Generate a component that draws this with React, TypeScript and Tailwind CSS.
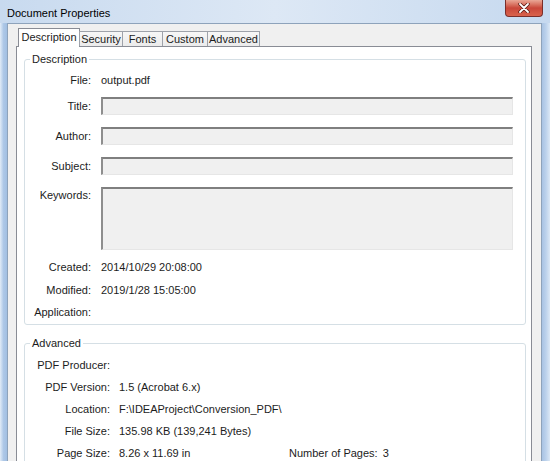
import React from "react";

function Group({
  title,
  children,
  className,
}: {
  title: string;
  children: React.ReactNode;
  className: string;
}) {
  return (
    <div className={`relative border border-[#d5dfe5] rounded-[3px] ${className}`}>
      <span className="absolute -top-[8px] left-[5px] px-[2px] bg-white leading-[14px]">{title}</span>
      {children}
    </div>
  );
}

function Field({ label, tall }: { label: string; tall?: boolean }) {
  return (
    <div className={tall ? "flex items-start mt-[12px]" : "flex items-center mt-[12px]"}>
      <div className={tall ? "w-[66px] shrink-0 text-right leading-[14px] pt-[1px]" : "w-[66px] shrink-0 text-right"}>
        {label}
      </div>
      <div
        className={`ml-[10px] flex-1 bg-[#f0f0f0] border-t-2 border-l-2 border-b border-r border-t-[#7f7f7f] border-l-[#8e8e8e] border-b-[#e6e6e6] border-r-[#e6e6e6] ${
          tall ? "h-[63px]" : "h-[18px]"
        }`}
      />
    </div>
  );
}

function Row({ label, value, className }: { label: string; value: string; className: string }) {
  return (
    <div className={`flex items-center h-[18px] ${className}`}>
      <div className="w-[66px] shrink-0 text-right">{label}</div>
      <div className="ml-[10px]">{value}</div>
    </div>
  );
}

function ARow({ label, children }: { label: string; children?: React.ReactNode }) {
  return (
    <div className="flex items-center h-[18px]">
      <div className="w-[85px] shrink-0 text-right">{label}</div>
      <div className="ml-[9px] flex items-center">{children}</div>
    </div>
  );
}

export default function App() {
  return (
    <div className="w-[550px] h-[461px] overflow-hidden flex flex-col bg-[#b9cfea] font-['Liberation_Sans',Arial,sans-serif] text-[11px] text-[#1c1c1c]">
      {/* title bar */}
      <div className="h-[23px] shrink-0 flex items-start bg-gradient-to-r from-[#c8daef] via-[#dde8f5] to-[#c6d9ef]">
        <span className="ml-[7px] mt-[6px] leading-[14px] text-black">Document Properties</span>
        <div className="ml-auto mr-[7px] w-[38px] h-[17px] rounded-b-[4px] border border-t-0 border-[#7a2e2a] bg-gradient-to-b from-[#e9a796] via-[#c9473a] to-[#d9624c] flex items-center justify-center">
          <svg width="12" height="10" viewBox="0 0 12 10">
            <path d="M2 1 L10 9 M10 1 L2 9" stroke="#5a1a14" strokeWidth="3.4" strokeLinecap="round" />
            <path d="M2 1 L10 9 M10 1 L2 9" stroke="#ffffff" strokeWidth="1.8" strokeLinecap="round" />
          </svg>
        </div>
      </div>

      <div className="flex-1 flex min-h-0">
        <div className="w-[7px] shrink-0 bg-gradient-to-r from-[#e2ecf7] via-[#aec8e7] to-[#a2bfe2]" />
        <div className="w-[535px] shrink-0 bg-[#f0f0f0] border-l border-t border-r border-[#8ea3bb] pl-[8px] pt-[4px] flex flex-col">
          {/* tabs */}
          <div className="relative z-10 h-[19px] shrink-0 flex items-end pl-[2px]">
            <div className="w-[62px] h-[19px] bg-white border border-b-0 border-[#898c95] flex items-center justify-center pb-[1px]">
              Description
            </div>
            <div className="w-[44px] h-[15px] mb-[1px] -ml-px border border-b-0 border-[#9ea2aa] bg-gradient-to-b from-[#f7f7f7] to-[#ebebeb] flex items-center justify-center">
              Security
            </div>
            <div className="w-[41px] h-[15px] mb-[1px] -ml-px border border-b-0 border-[#9ea2aa] bg-gradient-to-b from-[#f7f7f7] to-[#ebebeb] flex items-center justify-center">
              Fonts
            </div>
            <div className="w-[46px] h-[15px] mb-[1px] -ml-px border border-b-0 border-[#9ea2aa] bg-gradient-to-b from-[#f7f7f7] to-[#ebebeb] flex items-center justify-center">
              Custom
            </div>
            <div className="w-[53px] h-[15px] mb-[1px] -ml-px border border-b-0 border-[#9ea2aa] bg-gradient-to-b from-[#f7f7f7] to-[#ebebeb] flex items-center justify-center">
              Advanced
            </div>
          </div>

          {/* panel */}
          <div className="relative w-[516px] flex-1 -mt-px bg-white border border-b-0 border-[#898c95] pl-[7px] pr-[5px] pt-[12px]">
            <Group title="Description" className="pt-[11px] pb-[3px] pr-[12px]">
              <Row label="File:" value="output.pdf" className="" />
              <div className="-mt-[4px]">
                <Field label="Title:" />
              </div>
              <Field label="Author:" />
              <Field label="Subject:" />
              <Field label="Keywords:" tall />
              <Row label="Created:" value="2014/10/29 20:08:00" className="mt-[8px]" />
              <Row label="Modified:" value="2019/1/28 15:05:00" className="mt-[5px]" />
              <Row label="Application:" value="" className="mt-[4px]" />
            </Group>

            <Group title="Advanced" className="mt-[18px] pt-[12px] pb-[20px] flex flex-col gap-[4px]">
              <ARow label="PDF Producer:" />
              <ARow label="PDF Version:">1.5 (Acrobat 6.x)</ARow>
              <ARow label="Location:">F:\IDEAProject\Conversion_PDF\</ARow>
              <ARow label="File Size:">135.98 KB (139,241 Bytes)</ARow>
              <ARow label="Page Size:">
                <span className="w-[170px]">8.26 x 11.69 in</span>
                <span>Number of Pages:</span>
                <span className="ml-[5px]">3</span>
              </ARow>
            </Group>
          </div>
        </div>
        <div className="flex-1 bg-gradient-to-r from-[#a9c3e3] via-[#bcd2ec] to-[#dce8f5]" />
      </div>
    </div>
  );
}
